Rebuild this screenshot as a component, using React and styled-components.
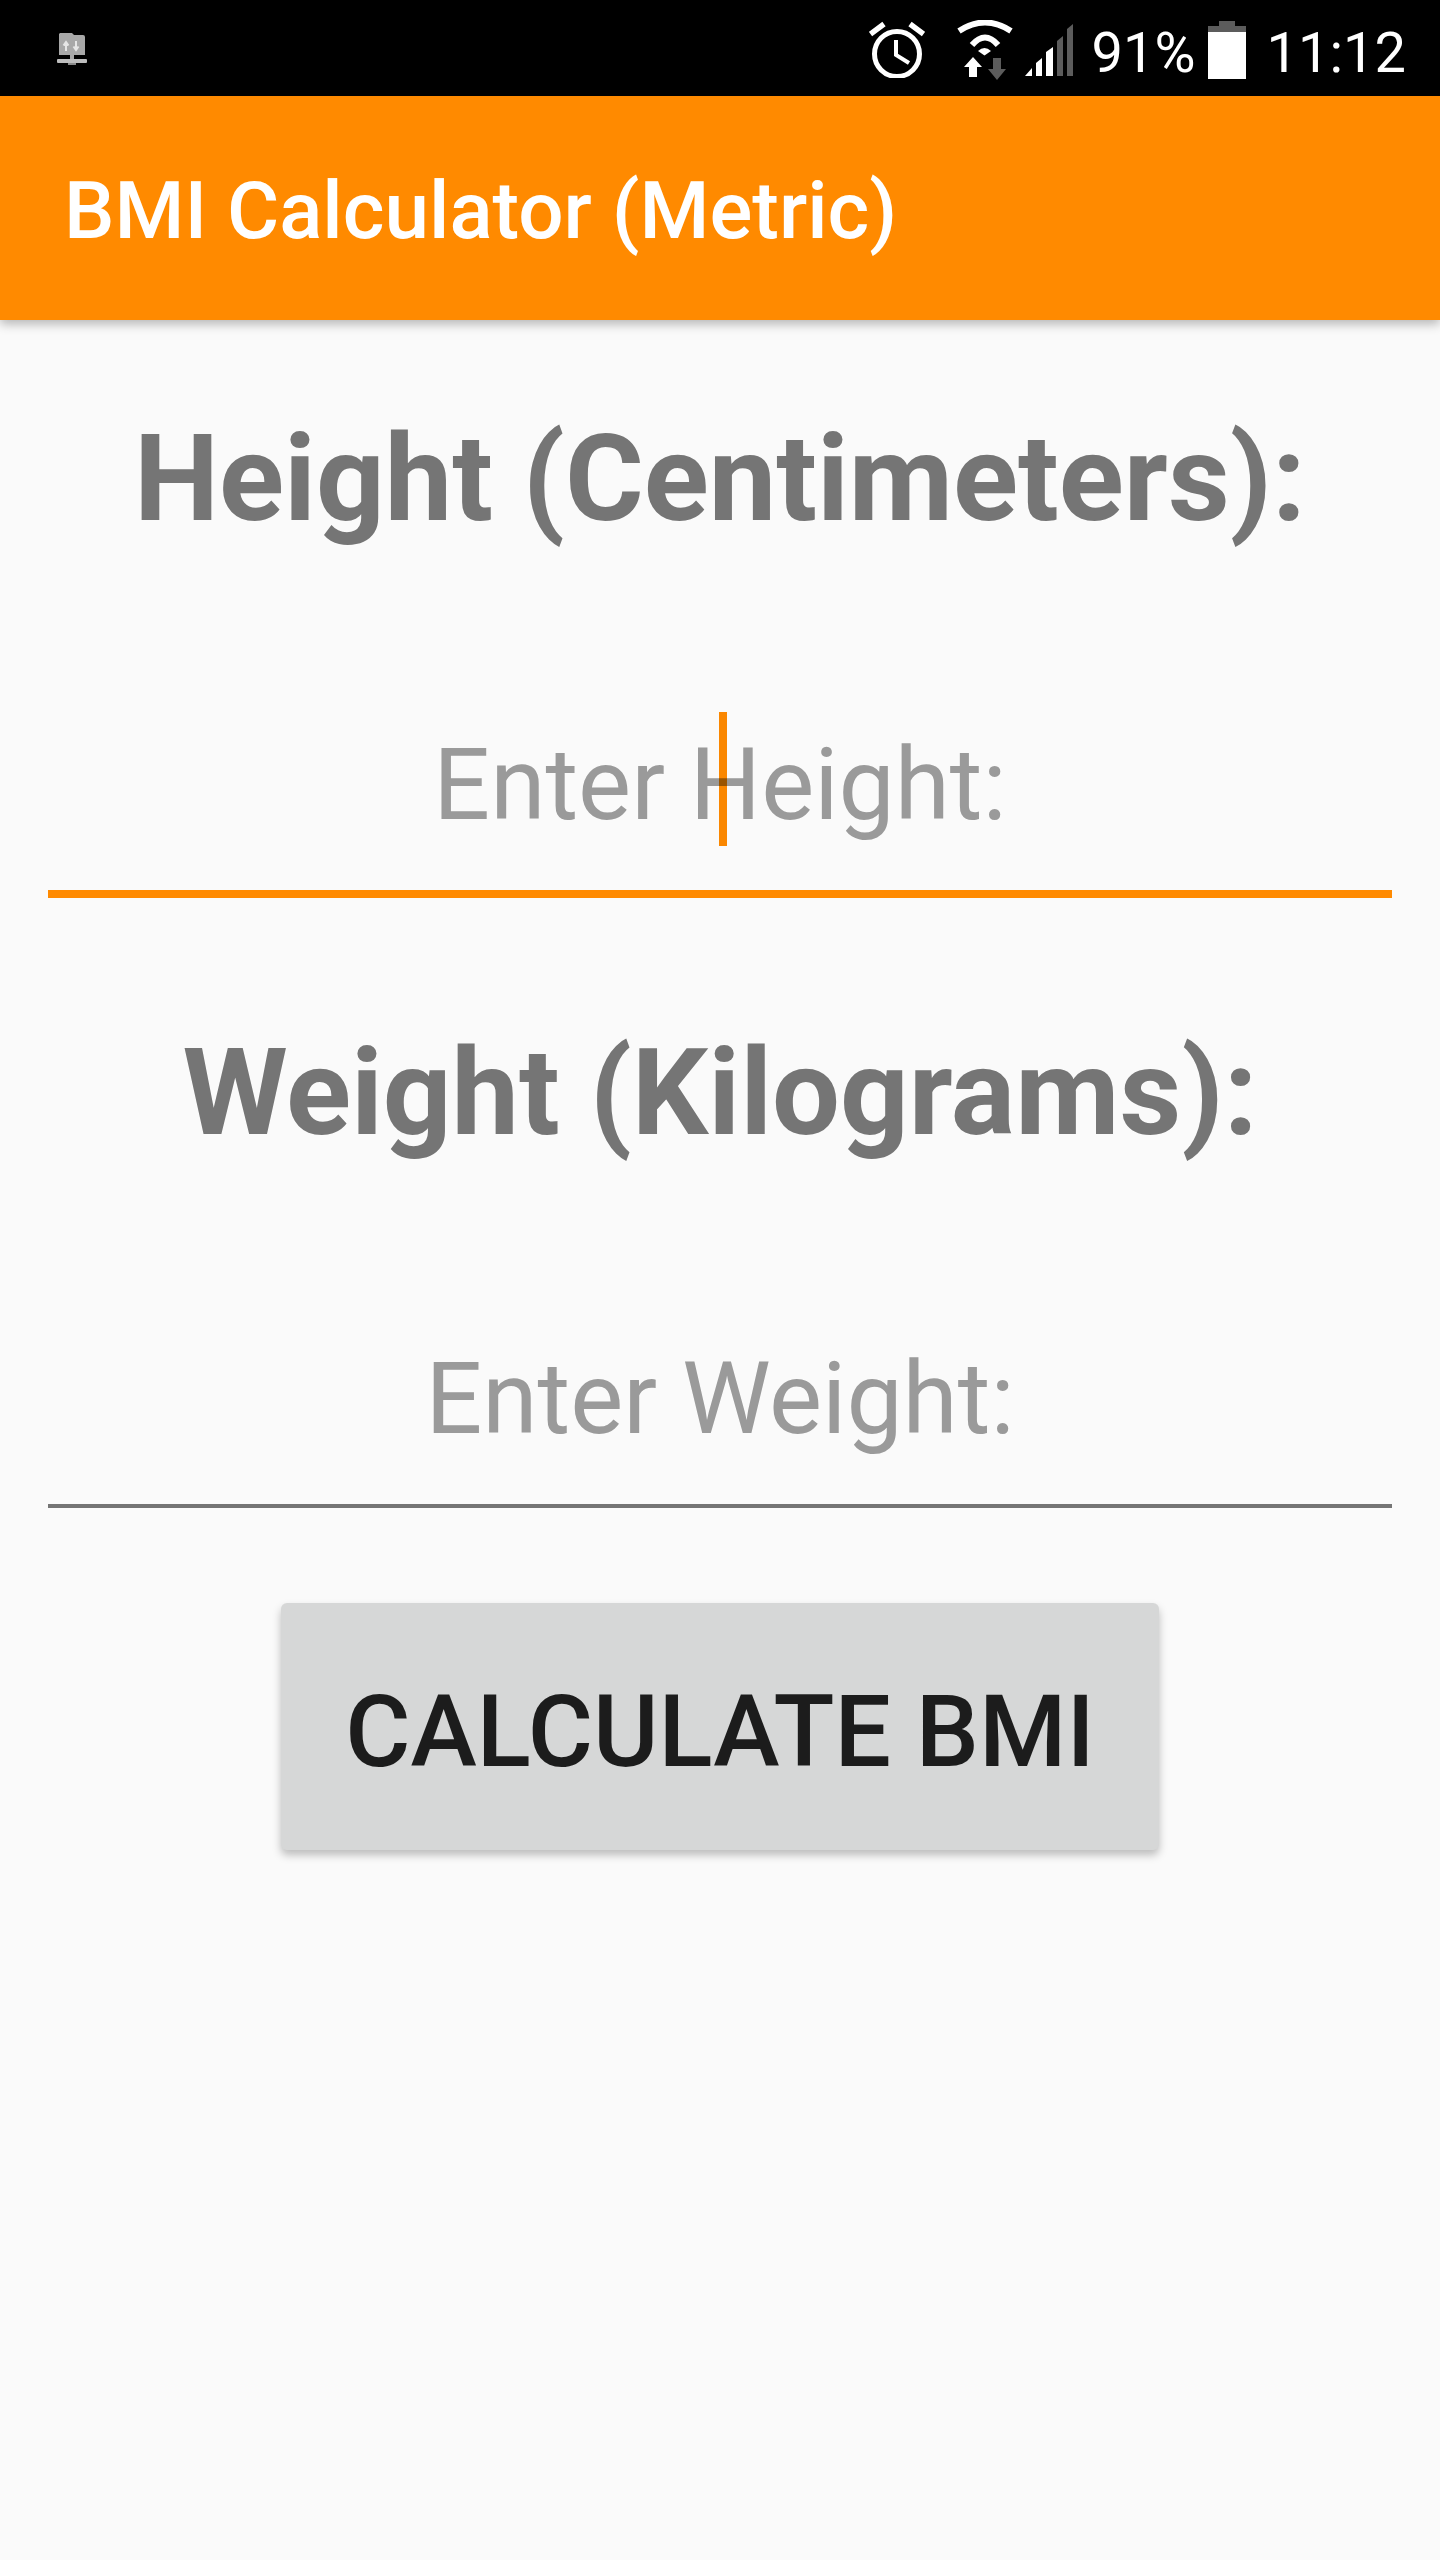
import React from 'react'
import styled, {createGlobalStyle} from 'styled-components'

const Global = createGlobalStyle`
    html, body {
        margin: 0;
        padding: 0;
        background: #fafafa;
        font-family: Roboto, "Liberation Sans", sans-serif;
    }
    * { box-sizing: border-box; }
`

const ServerIcon = () => (
    <svg width="30" height="36" viewBox="0 0 30 36">
        <path d="M3 3h12l2 2h9a2 2 0 0 1 2 2v18H2V4z" fill="#a8a8a8"/>
        <path d="M9 21v-8M6.500 15.500 9 12l2.500 3.500M19 11v8M16.500 16.500 19 20l2.500-3.500" stroke="#e6e6e6" strokeWidth="2" fill="none"/>
        <path d="M13 25h4v5h-4z" fill="#a8a8a8"/>
        <rect x="0" y="29" width="30" height="4" rx="1" fill="#bdbdbd"/>
        <rect x="11" y="33" width="8" height="2" fill="#8a8a8a"/>
    </svg>
)

const AlarmIcon = () => (
    <svg width="56" height="58" viewBox="0 0 56 58" fill="none" stroke="#fff">
        <circle cx="28" cy="34" r="22.500" strokeWidth="5"/>
        <path d="M27 20v15l13 8" strokeWidth="4"/>
        <path d="M1.500 14 15 4M54.500 14 41 4" strokeWidth="5.500"/>
    </svg>
)

const WifiIcon = () => (
    <svg width="56" height="60" viewBox="0 0 56 60">
        <g fill="none" stroke="#fff" strokeWidth="6">
            <path d="M2 11Q28 -6 54 11"/>
            <path d="M15 25Q28 10 41 25"/>
        </g>
        <path d="M21 31Q27.500 25 34 31l-6.500 4.500z" fill="#fff"/>
        <path d="M16 37 25 47h-5v10h-8V47H7z" fill="#fff"/>
        <path d="M36 38h8v11h5L40 60 31 49h5z" fill="#5c5c5c"/>
    </svg>
)

const SignalIcon = () => (
    <svg width="48" height="52" viewBox="0 0 48 52">
        <path d="M0 52 7 44v8z" fill="#fff"/>
        <path d="M11 39 17 34v18h-6z" fill="#fff"/>
        <path d="M21 28 28 23v29h-7z" fill="#fff"/>
        <path d="M32 17 38 12v40h-6z" fill="#5c5c5c"/>
        <path d="M42 5 48 0v52h-6z" fill="#5c5c5c"/>
    </svg>
)

const BatteryIcon = () => (
    <svg width="38" height="58" viewBox="0 0 38 58">
        <path d="M11 0h16v5h11v6H0V5h11z" fill="#5c5c5c"/>
        <rect x="0" y="11" width="38" height="47" fill="#fff"/>
    </svg>
)

export default function App(){
    return(
        <Screen>
            <Global/>
            <StatusBar>
                <ServerIcon/>
                <StatusRight>
                    <Alarm><AlarmIcon/></Alarm>
                    <Wifi><WifiIcon/></Wifi>
                    <Signal><SignalIcon/></Signal>
                    <StatusText>91%</StatusText>
                    <Battery><BatteryIcon/></Battery>
                    <Clock>11:12</Clock>
                </StatusRight>
            </StatusBar>
            <AppBar>BMI Calculator (Metric)</AppBar>
            <Content>
                <Field>
                    <Heading>Height (Centimeters):</Heading>
                    <InputWrap focused>
                        <Input placeholder="Enter Height:" readOnly/>
                        <Caret/>
                    </InputWrap>
                </Field>
                <Field>
                    <Heading>Weight (Kilograms):</Heading>
                    <InputWrap>
                        <Input placeholder="Enter Weight:" readOnly/>
                    </InputWrap>
                </Field>
                <CalcButton>CALCULATE BMI</CalcButton>
            </Content>
        </Screen>
    )
}

const Screen = styled.div`
    width: 1440px;
    height: 2560px;
    background: #fafafa;
    overflow: hidden;
`
const StatusBar = styled.div`
    height: 96px;
    background: #000;
    display: flex;
    align-items: center;
    justify-content: space-between;
    padding: 0 34px 0 57px;
`
const StatusRight = styled.div`
    display: flex;
    align-items: center;
    color: #fff;
`
const Alarm = styled.div`
    display: flex;
    margin-top: 2px;
`
const Wifi = styled.div`
    display: flex;
    margin-left: 32px;
    margin-top: 4px;
`
const Signal = styled.div`
    display: flex;
    margin-left: 12px;
    margin-top: 4px;
`
const StatusText = styled.span`
    font-size: 56px;
    line-height: 96px;
    margin-left: 19px;
    margin-top: 10px;
`
const Battery = styled.div`
    display: flex;
    margin-left: 12px;
    margin-top: 4px;
`
const Clock = styled.span`
    font-size: 56px;
    line-height: 96px;
    margin-left: 21px;
    margin-top: 10px;
`
const AppBar = styled.div`
    height: 224px;
    background: #ff8a00;
    color: #fff;
    font-size: 80px;
    font-weight: 500;
    display: flex;
    align-items: center;
    padding: 6px 0 0 64px;
    box-shadow: 0 4px 10px rgba(0, 0, 0, 0.28);
    position: relative;
`
const Content = styled.div`
    display: flex;
    flex-direction: column;
    align-items: center;
    padding: 88px 48px 0;
`
const Field = styled.div`
    width: 100%;
    display: flex;
    flex-direction: column;
    align-items: center;
    & + & {
        margin-top: 124px;
    }
`
const Heading = styled.h1`
    margin: 0;
    font-size: 120.4px;
    font-weight: 700;
    line-height: 141px;
    color: #757575;
    text-align: center;
`
const InputWrap = styled.div`
    position: relative;
    width: 100%;
    height: ${(props) => props.focused ? '251px' : '247px'};
    margin-top: 98px;
    padding-top: 32px;
    display: flex;
    align-items: center;
    border-bottom: ${(props) => props.focused ? '8px solid #ff8a00' : '4px solid #757575'};
`
const Input = styled.input`
    width: 100%;
    border: 0;
    outline: 0;
    background: transparent;
    padding: 0;
    font-family: Roboto, sans-serif;
    font-size: 100px;
    text-align: center;
    color: #333;
    &::placeholder {
        color: #9a9a9a;
        opacity: 1;
    }
`
const Caret = styled.span`
    position: absolute;
    left: 671px;
    top: 65px;
    width: 8px;
    height: 134px;
    background: #ff8a00;
    mix-blend-mode: multiply;
`
const CalcButton = styled.button`
    width: 878px;
    height: 247px;
    margin-top: 95px;
    padding: 10px 0 0;
    border: 0;
    border-radius: 6px;
    background: #d6d7d7;
    color: #1c1c1c;
    font-family: Roboto, sans-serif;
    font-size: 100px;
    font-weight: 550;
    box-shadow: 0 5px 8px rgba(0, 0, 0, 0.25);
`
